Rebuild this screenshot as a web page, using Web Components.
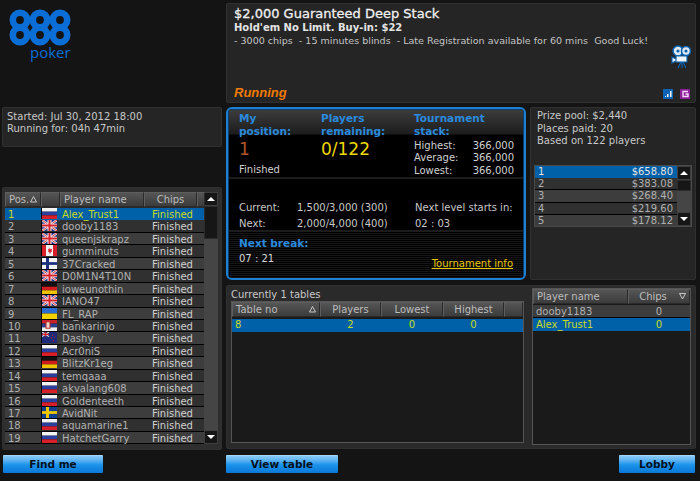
<!DOCTYPE html>
<html>
<head>
<meta charset="utf-8">
<title>Tournament lobby</title>
<style>
html, body { margin: 0; height: 100%; }
body {
    background: #141414;
    color: #c8c8c8;
    font: 10px "DejaVu Sans", sans-serif;
    overflow: hidden;
}
</style>
</head>
<body>
<lobby-page>
    <logo-888 slot="logo"></logo-888>
    <info-panel slot="started"></info-panel>
    <player-panel slot="players"></player-panel>
    <blue-button slot="find" style="width:100px">Find me</blue-button>
    <header-panel slot="header"></header-panel>
    <status-panel slot="status"></status-panel>
    <prize-panel slot="prize"></prize-panel>
    <tables-panel slot="tables"></tables-panel>
    <blue-button slot="view" style="width:112px">View table</blue-button>
    <blue-button slot="lobby" style="width:76px">Lobby</blue-button>
</lobby-page>

<script>
const BOX = `background:#252525;border:1px solid #303030;border-radius:2px;box-sizing:border-box;`;

function shadow(el, html) {
    el.attachShadow({ mode: 'open' }).innerHTML = html;
}

class LobbyPage extends HTMLElement {
    connectedCallback() {
        shadow(this, `
        <style>
            :host { display: grid; grid-template-columns: 220px 470px; column-gap: 4px; padding: 3px 0 0 2px; width: 700px; height: 478px; box-sizing: border-box; }
            .left, .right { display: flex; flex-direction: column; }
            .logo { height: 104px; }
            .started { height: 40px; }
            .players { margin-top: 40px; height: 263px; }
            .foot-l { margin: 5px 0 0 1px; }
            .middle { display: flex; gap: 4px; height: 173px; margin-top: 4px; }
            .tables { margin-top: 5px; height: 164px; }
            .foot { display: flex; justify-content: space-between; margin: 6px 1px 0 0; }
        </style>
        <div class="left">
            <div class="logo"><slot name="logo"></slot></div>
            <div class="started"><slot name="started"></slot></div>
            <div class="players"><slot name="players"></slot></div>
            <div class="foot-l"><slot name="find"></slot></div>
        </div>
        <div class="right">
            <slot name="header"></slot>
            <div class="middle"><slot name="status"></slot><slot name="prize"></slot></div>
            <div class="tables"><slot name="tables"></slot></div>
            <div class="foot"><slot name="view"></slot><slot name="lobby"></slot></div>
        </div>`);
    }
}

class Logo888 extends HTMLElement {
    connectedCallback() {
        let rings = '';
        for (const cx of [20, 40, 60]) for (const cy of [20, 35]) {
            rings += `<circle cx="${cx}" cy="${cy}" r="7.2" fill="none" stroke="#0a6ed6" stroke-width="6.6"/>`;
        }
        shadow(this, `
        <style>
            :host { display: block; height: 104px; }
            .wrap { display: flex; flex-direction: column; }
            svg { display: block; margin-left: -2px; }
            span { margin: -2px 0 0 28px; font: 15px/16px "Open Sans", sans-serif; color: #0a6ed6; }
        </style>
        <div class="wrap">
            <svg width="80" height="43" viewBox="0 3 80 43">${rings}</svg>
            <span>poker</span>
        </div>`);
    }
}

class InfoPanel extends HTMLElement {
    connectedCallback() {
        shadow(this, `
        <style>
            :host { display: block; height: 40px; ${BOX} padding: 3px 4px; line-height: 12px; color: #c8c8c8; }
        </style>
        Started: Jul 30, 2012 18:00<br>Running for: 04h 47min`);
    }
}

class HeaderPanel extends HTMLElement {
    connectedCallback() {
        shadow(this, `
        <style>
            :host { display: flex; height: 100px; ${BOX} padding: 1px 4px 2px 7px; }
            .text { flex: 1; display: flex; flex-direction: column; }
            h1 { margin: 0; font-size: 13px; line-height: 17px; font-weight: 400; color: #f0f0f0; -webkit-text-stroke: .3px #f0f0f0; }
            h2 { margin: 0; font-size: 10px; line-height: 12px; font-weight: 700; color: #e4e4e4; }
            p { margin: 0; font-size: 9.55px; line-height: 13px; color: #c4c4c4; white-space: pre; }
            em { margin-top: auto; font: italic 700 13px/14px "Liberation Sans", sans-serif; color: #ef7a00; }
            .icons { display: flex; flex-direction: column; align-items: flex-end; }
            .badges { margin-top: auto; display: flex; gap: 7px; padding: 0 1px 1px 0; }
            .cam { margin-top: 40px; }
            .b { width: 10px; height: 10px; display: block; }
        </style>
        <div class="text">
            <h1>$2,000 Guaranteed Deep Stack</h1>
            <h2>Hold'em No Limit. Buy-in: $22</h2>
            <p>- 3000 chips  - 15 minutes blinds  - Late Registration available for 60 mins  Good Luck!</p>
            <em>Running</em>
        </div>
        <div class="icons">
            <svg class="cam" width="20" height="24" viewBox="0 0 20 24">
                <circle cx="7" cy="6" r="5" fill="#dfe9f2" stroke="#0a62ae" stroke-width="1.6"/>
                <circle cx="15" cy="6" r="4.5" fill="#dfe9f2" stroke="#0a62ae" stroke-width="1.6"/>
                <circle cx="7" cy="6" r="1.6" fill="#0a62ae"/><circle cx="15" cy="6" r="1.6" fill="#0a62ae"/>
                <path d="M5 11h11v6H5zM1 12l4 2v2l-4 2z" fill="#f2f6fa" stroke="#0a62ae" stroke-width="1.2"/>
                <path d="M10 17l-3 6M11 17v6M12 17l3 6" stroke="#0a62ae" stroke-width="1.2" fill="none"/>
            </svg>
            <div class="badges">
                <svg class="b" viewBox="0 0 10 10"><rect width="10" height="10" fill="#0f63b4"/><path d="M2 7h1v1H2zM4 5h1.5v3H4zM7 2h1.5v6H7z" fill="#fff"/></svg>
                <svg class="b" viewBox="0 0 10 10"><rect width="10" height="10" fill="#8e1e9c"/><path d="M8 2.5H3v5h5V5H5.5" fill="none" stroke="#f3d9f6" stroke-width="1.4"/></svg>
            </div>
        </div>`);
    }
}

class StatusPanel extends HTMLElement {
    connectedCallback() {
        shadow(this, `
        <style>
            :host { display: block; width: 300px; height: 173px; box-sizing: border-box; border: 2px solid #1f80d2; border-radius: 6px; background: #000; box-shadow: inset 0 0 0 1px #0b3e6e; padding: 1px; overflow: hidden; }
            b { display: block; color: #2a8ade; font-size: 10.5px; line-height: 12.5px; font-weight: 700; }
            .top { display: grid; grid-template-columns: 82px 93px 1fr; height: 69px; padding: 2px 9px 0 10px; box-sizing: border-box; border-bottom: 2px solid #1c1c1c;
                   background: linear-gradient(#3c3c3c 0, #1c1c1c 24px, #000 25px); }
            .big { font-size: 17px; line-height: 22px; margin-top: 1px; }
            .one { color: #b2562a; }
            .zero { color: #efd800; }
            .fin { margin-top: 3px; line-height: 14px; color: #d0d0d0; }
            .stack { display: grid; grid-template-columns: 1fr auto; line-height: 12.3px; color: #d0d0d0; margin-top: 3px; }
            .blinds { display: grid; grid-template-columns: 58px 118px 1fr; height: 53px; padding: 21px 0 0 10px; box-sizing: border-box; border-bottom: 2px solid #1c1c1c; line-height: 15.5px; color: #c8c8c8; align-content: start; }
            .next { height: 44px; padding: 5px 9px 0 10px; line-height: 15px; color: #d8d8d8;
                    display: grid; grid-template-columns: 1fr auto;
                    background: repeating-linear-gradient(#000 0 1px, #161616 1px 2px); }
            .next a { align-self: end; color: #e8c800; text-decoration: underline; line-height: 12px; margin: 0 1px 11px 0; }
            .next b { margin-bottom: 1px; }
        </style>
        <div class="top">
            <div><b>My<br>position:</b><div class="big one">1</div><div class="fin">Finished</div></div>
            <div><b>Players<br>remaining:</b><div class="big zero">0/122</div></div>
            <div><b>Tournament<br>stack:</b>
                <div class="stack"><span>Highest:</span><span>366,000</span><span>Average:</span><span>366,000</span><span>Lowest:</span><span>366,000</span></div>
            </div>
        </div>
        <div class="blinds">
            <span>Current:</span><span>1,500/3,000 (300)</span><span>Next level starts in:</span>
            <span>Next:</span><span>2,000/4,000 (400)</span><span>02 : 03</span>
        </div>
        <div class="next">
            <div><b>Next break:</b>07 : 21</div>
            <a>Tournament info</a>
        </div>`);
    }
}

class FlagIcon extends HTMLElement {
    static flags = {
        ru: '<rect width="15" height="4" fill="#f4f4f4"/><rect y="4" width="15" height="4" fill="#2a3f9e"/><rect y="8" width="15" height="4" fill="#d8202a"/>',
        de: '<rect width="15" height="4" fill="#111"/><rect y="4" width="15" height="4" fill="#d01c1c"/><rect y="8" width="15" height="4" fill="#f0c400"/>',
        ua: '<rect width="15" height="6" fill="#2a6cd0"/><rect y="6" width="15" height="6" fill="#f2d200"/>',
        rs: '<rect width="15" height="4" fill="#c8242c"/><rect y="4" width="15" height="4" fill="#24408e"/><rect y="8" width="15" height="4" fill="#f0f0f0"/><rect x="4" y="2" width="4" height="7" fill="#e8d8c8" stroke="#c02028"/>',
        gb: '<rect width="15" height="12" fill="#1c2f80"/><path d="M0 0l15 12M15 0L0 12" stroke="#f4f4f4" stroke-width="2.4"/><path d="M0 0l15 12M15 0L0 12" stroke="#d8202a" stroke-width="1"/><path d="M7.5 0v12M0 6h15" stroke="#f4f4f4" stroke-width="4"/><path d="M7.5 0v12M0 6h15" stroke="#d8202a" stroke-width="2"/>',
        ca: '<rect width="15" height="12" fill="#f4f4f4"/><rect width="4" height="12" fill="#d8202a"/><rect x="11" width="4" height="12" fill="#d8202a"/><path d="M7.5 2.5l1 2 1.5-.4-.5 2.4.8.4-2 1.6v1.3h-.6V8.5l-2-1.6.8-.4-.5-2.4 1.5.4z" fill="#d8202a"/>',
        fi: '<rect width="15" height="12" fill="#f4f4f4"/><rect y="4.5" width="15" height="3" fill="#1c2f80"/><rect x="4" width="3" height="12" fill="#1c2f80"/>',
        nz: '<rect width="15" height="12" fill="#1c2a78"/><path d="M0 0l7 5M7 0L0 5" stroke="#e8e8e8" stroke-width="1.2"/><path d="M3.5 0v5M0 2.5h7" stroke="#d8202a" stroke-width="1.4"/><path d="M10 3h1v1h-1zM12 5h1v1h-1zM9 6h1v1H9zM11 9h1v1h-1z" fill="#d8202a"/>',
        se: '<rect width="15" height="12" fill="#10408e"/><rect y="4.5" width="15" height="3" fill="#f0c800"/><rect x="4" width="3" height="12" fill="#f0c800"/>'
    };
    connectedCallback() {
        const code = this.getAttribute('code');
        shadow(this, `
        <style>:host { display: block; width: 16px; height: 11px; background: #000; } svg { display: block; margin-left: 1px; }</style>
        <svg width="15" height="11" viewBox="0 0 15 12" preserveAspectRatio="none">${FlagIcon.flags[code] || ''}</svg>`);
    }
}

class ScrollBar extends HTMLElement {
    connectedCallback() {
        const thumb = this.getAttribute('thumb') || 33;
        shadow(this, `
        <style>
            :host { display: flex; flex-direction: column; width: 14px; flex: none; background: #454545; box-sizing: border-box; }
            .btn { height: 14px; background: #161616; border: 1px solid #3e3e3e; box-sizing: border-box; display: flex; align-items: center; justify-content: center; flex: none; }
            .btn i { width: 0; height: 0; border-left: 4px solid transparent; border-right: 4px solid transparent; }
            .up i { border-bottom: 4px solid #fff; }
            .dn i { border-top: 4px solid #fff; }
            .thumb { height: ${thumb}px; background: #161616; border: 1px solid #2c2c2c; box-sizing: border-box; flex: none; }
            .rest { flex: 1; }
        </style>
        <div class="btn up"><i></i></div>
        <div class="thumb"></div>
        <div class="rest"></div>
        <div class="btn dn"><i></i></div>`);
    }
}

class DataGrid extends HTMLElement {
    constructor() {
        super();
        this.attachShadow({ mode: 'open' });
    }

    set config(cfg) {
        this.render(cfg);
    }

    sortMark(dir) {
        const pts = dir === 'up' ? '3.5,.5 6.5,6 .5,6' : '.5,.5 6.5,.5 3.5,6';
        return `<svg class="mark" width="7" height="7" viewBox="0 0 7 7"><polygon points="${pts}" fill="none" stroke="#c8c8c8"/></svg>`;
    }

    render(cfg) {
        const cols = cfg.columns;
        const tpl = cols.map(c => c.width + 'px').join(' ');
        const head = cols.map(c => `
            <div class="th ${c.align || ''}"><span>${c.label}</span>${c.sort ? this.sortMark(c.sort) : ''}</div>`).join('');
        const body = cfg.rows.map((r, n) => `
            <div class="tr ${n === cfg.selected ? 'sel' : (n % 2 ? 'odd' : 'even')}">
                ${r.map((v, i) => String(v).startsWith('flag:')
                    ? `<div class="td flag"><flag-icon code="${v.slice(5)}"></flag-icon></div>`
                    : `<div class="td ${cols[i].cell || ''}">${v}</div>`).join('')}
            </div>`).join('');
        this.shadowRoot.innerHTML = `
        <style>
            :host { display: flex; height: 100%; box-sizing: border-box; color: #b0b0b0; overflow: hidden; background: ${cfg.bg || '#1a1a1a'}; ${cfg.frame ? 'border:1px solid #555;' : ''} }
            .main { flex: 1; min-width: 0; display: flex; flex-direction: column; }
            .head, .tr { display: grid; grid-template-columns: ${tpl}; }
            .head { height: 15px; flex: none; margin-bottom: ${cfg.headGap ?? 1}px; background: #3e3e3e; }
            .th { position: relative; box-sizing: border-box; height: 15px; background: linear-gradient(#555, #3c3c3c); border: 1px solid #5e5e5e; border-right-color: #2a2a2a; border-bottom-color: #2a2a2a; line-height: 13px; padding-left: 3px; color: #bdbdbd; white-space: nowrap; overflow: hidden; }
            .th.center { text-align: center; padding: 0; }
            .th.shift { padding-right: 12px; }
            .mark { position: absolute; right: 3px; top: 3px; }
            .tr { height: ${cfg.rowHeight || 12.44}px; flex: none; line-height: ${cfg.rowLine || 11}px; background-image: linear-gradient(to top, #000 1px, transparent 1px); }
            .even { background-color: #3d3d3d; }
            .odd { background-color: #303030; }
            .sel { background-color: #0060a8; background-image: none; color: ${cfg.selColor || '#c8dc1e'}; }
            /* cells stay above the next row's background so descenders are not cut */
            .td { position: relative; z-index: 1; padding-left: 3px; white-space: nowrap; }
            .td.center { text-align: center; padding: 0; }
            .td.right { text-align: right; padding: 0 3px 0 0; }
            .td.name { padding-left: 2px; }
            .td.chips { padding-left: 8px; color: #cfcfcf; }
            .sel .td.chips { color: ${cfg.selColor || '#c8dc1e'}; }
            .flag { padding: 0; }
        </style>
        <div class="main">
            ${cfg.noHead ? '' : `<div class="head">${head}</div>`}
            ${body}
        </div>
        ${cfg.scroll ? `<scroll-bar thumb="${cfg.scroll}"></scroll-bar>` : ''}`;
    }
}

const PLAYERS = [
    ['Alex_Trust1', 'ru'], ['dooby1183', 'gb'], ['queenjskrapz', 'gb'], ['gumminuts', 'ca'],
    ['37Cracked', 'fi'], ['D0M1N4T10N', 'gb'], ['ioweunothin', 'de'], ['IANO47', 'gb'],
    ['FL_RAP', 'ua'], ['bankarinjo', 'rs'], ['Dashy', 'nz'], ['Acr0niS', 'ru'],
    ['BlitzKr1eg', 'de'], ['temqaaa', 'ru'], ['akvalang608', 'ru'], ['Goldenteeth', 'ru'],
    ['AvidNit', 'se'], ['aquamarine1', 'ru'], ['HatchetGarry', 'ru']
];

class PlayerPanel extends HTMLElement {
    connectedCallback() {
        shadow(this, `
        <style>
            :host { display: block; height: 263px; ${BOX} padding: 4px 3px 5px 2px; background: #2e2e2e; }
            data-grid { height: 252px; }
        </style>
        <data-grid></data-grid>`);
        this.shadowRoot.querySelector('data-grid').config = {
            selected: 0, scroll: 33, bg: '#2a2a2a', rowLine: 13,
            columns: [
                { label: 'Pos.', width: 36, sort: 'up' }, { label: '', width: 19 },
                { label: 'Player name', width: 84, cell: 'name' }, { label: 'Chips', width: 53, align: 'center', cell: 'chips' },
                { label: '', width: 8 }
            ],
            rows: PLAYERS.map((p, i) => [i + 1, 'flag:' + p[1], p[0], 'Finished', ''])
        };
    }
}

class PrizePanel extends HTMLElement {
    connectedCallback() {
        shadow(this, `
        <style>
            :host { display: block; width: 166px; height: 173px; ${BOX} padding: 2px 3px 0 3px; line-height: 12.5px; color: #c8c8c8; }
            .lines { height: 49px; padding-left: 3px; }
            .list { height: 62px; box-sizing: border-box; margin-top: 6px; }
            data-grid { border: 1px solid #4a4a4a; }
        </style>
        <div class="lines">Prize pool: $2,440<br>Places paid: 20<br>Based on 122 players</div>
        <div class="list"><data-grid></data-grid></div>`);
        this.shadowRoot.querySelector('data-grid').config = {
            selected: 0, noHead: true, scroll: 11, bg: '#2a2a2a', rowHeight: 12.2, rowLine: 12, selColor: '#e4e4e4',
            columns: [{ label: '', width: 70 }, { label: '', width: 71, cell: 'right' }],
            rows: [[1, '$658.80'], [2, '$383.08'], [3, '$268.40'], [4, '$219.60'], [5, '$178.12']]
        };
    }
}

class TablesPanel extends HTMLElement {
    connectedCallback() {
        shadow(this, `
        <style>
            :host { display: flex; height: 164px; ${BOX} background: #2a2a2a; padding: 0 4px 0 4px; }
            .left { width: 293px; }
            .label { height: 15px; line-height: 17px; color: #c8c8c8; }
            .left data-grid { height: 142px; }
            .right { width: 159px; margin: 2px 0 0 8px; }
            .right data-grid { height: 157px; }
        </style>
        <div class="left"><div class="label">Currently 1 tables</div><data-grid id="t"></data-grid></div>
        <div class="right"><data-grid id="p"></data-grid></div>`);
        this.shadowRoot.querySelector('#t').config = {
            frame: true, selected: 0, rowHeight: 13, rowLine: 12, headGap: 2, bg: '#1a1a1a',
            columns: [
                { label: 'Table no', width: 88, sort: 'up' },
                { label: 'Players', width: 61, align: 'center', cell: 'center' },
                { label: 'Lowest', width: 62, align: 'center', cell: 'center' },
                { label: 'Highest', width: 61, align: 'center', cell: 'center' },
                { label: '', width: 19 }
            ],
            rows: [[8, 2, 0, 0, '']]
        };
        this.shadowRoot.querySelector('#p').config = {
            frame: true, selected: 1, rowHeight: 13, rowLine: 13, headGap: 1, bg: '#1a1a1a',
            columns: [
                { label: 'Player name', width: 95 },
                { label: 'Chips', width: 62, align: 'center shift', sort: 'down', cell: 'center' }
            ],
            rows: [['dooby1183', 0], ['Alex_Trust1', 0]]
        };
    }
}

class BlueButton extends HTMLElement {
    connectedCallback() {
        shadow(this, `
        <style>
            :host { display: block; height: 18px; box-sizing: border-box; border-radius: 1px; background: linear-gradient(#88caf8 0, #62b4f2 4px, #1a92ea 9px, #0a78d8 100%); border-top: 1px solid #a4d8fb; color: #04101e; font-weight: 700; font-size: 10.5px; line-height: 17px; text-align: center; }
        </style>
        <slot></slot>`);
    }
}

customElements.define('flag-icon', FlagIcon);
customElements.define('scroll-bar', ScrollBar);
customElements.define('data-grid', DataGrid);
customElements.define('logo-888', Logo888);
customElements.define('info-panel', InfoPanel);
customElements.define('player-panel', PlayerPanel);
customElements.define('header-panel', HeaderPanel);
customElements.define('status-panel', StatusPanel);
customElements.define('prize-panel', PrizePanel);
customElements.define('tables-panel', TablesPanel);
customElements.define('blue-button', BlueButton);
customElements.define('lobby-page', LobbyPage);
</script>
</body>
</html>
